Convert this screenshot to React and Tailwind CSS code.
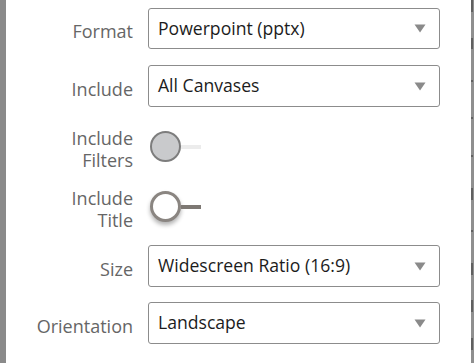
import React from "react";

function Chevron() {
  return (
    <svg width="12" height="9" viewBox="0 0 12 9" className="shrink-0">
      <path d="M0.5 0.5 L11.5 0.5 L6 8.5 Z" fill="#8a8a8a" />
    </svg>
  );
}

function Select({ value }) {
  return (
    <div className="ml-[15px] flex h-full w-[292px] items-center justify-between rounded-[3px] border border-[#8c8c8c] bg-white pl-[9px] pr-[13px]">
      <span className="text-[17.6px] leading-none text-[#1c1c1c]">{value}</span>
      <Chevron />
    </div>
  );
}

function Label({ children, two }) {
  return (
    <div
      className={
        two
          ? "mt-[6px] w-[127px] shrink-0 text-right text-[18px] leading-[22px] text-[#666666]"
          : "mt-[5px] w-[127px] shrink-0 text-right text-[18px] leading-[22px] text-[#666666]"
      }
    >
      {children}
    </div>
  );
}

function Toggle({ on }) {
  return (
    <div className="ml-[17px] flex h-[32px] w-[51px] items-center">
      <div
        className={
          on
            ? "h-[31px] w-[31px] shrink-0 rounded-full border-[3px] border-[#8a8581] bg-white shadow-[0_3px_4px_rgba(0,0,0,0.3)]"
            : "h-[31px] w-[31px] shrink-0 rounded-full border-2 border-[#7d7d7d] bg-[#c9cacc]"
        }
      />
      <div
        className={
          on
            ? "mt-[2px] h-[4px] flex-1 bg-[#7d7873]"
            : "mt-[2px] h-[4px] flex-1 bg-[#ececec]"
        }
      />
    </div>
  );
}

function Strip() {
  const marks = [
    [0, 12],
    [38, 11],
    [80, 2],
    [117, 2],
    [155, 2],
    [188, 12],
    [230, 2],
    [263, 12],
    [300, 12],
    [338, 12],
  ];
  return (
    <svg width="3" height="363" className="block shrink-0">
      <rect x="0" y="0" width="3" height="363" fill="#8f8f8f" />
      {marks.map(([y, h], i) => (
        <rect key={i} x="0.5" y={y} width="1" height={h} fill="#333" />
      ))}
    </svg>
  );
}

export default function App() {
  return (
    <div
      className="flex h-[363px] w-[474px] overflow-hidden bg-white"
      style={{ fontFamily: '"Open Sans", "Noto Sans", sans-serif' }}
    >
      <div className="w-[6px] shrink-0 bg-[#8a8a8a]" />
      <div className="flex flex-1 flex-col">
        <div className="mt-[8px] flex h-[41px] items-center">
          <Label>Format</Label>
          <Select value="Powerpoint (pptx)" />
        </div>
        <div className="mt-[16px] flex h-[42px] items-center">
          <Label>Include</Label>
          <Select value="All Canvases" />
        </div>
        <div className="mt-[16px] flex h-[46px] items-center">
          <Label two>
            Include
            <br />
            Filters
          </Label>
          <Toggle on={false} />
        </div>
        <div className="mt-[14px] flex h-[46px] items-center">
          <Label two>
            Include
            <br />
            Title
          </Label>
          <Toggle on={true} />
        </div>
        <div className="mt-[16px] flex h-[42px] items-center">
          <Label>Size</Label>
          <Select value="Widescreen Ratio (16:9)" />
        </div>
        <div className="mt-[15px] flex h-[42px] items-center">
          <Label>Orientation</Label>
          <Select value="Landscape" />
        </div>
      </div>
      <Strip />
    </div>
  );
}
